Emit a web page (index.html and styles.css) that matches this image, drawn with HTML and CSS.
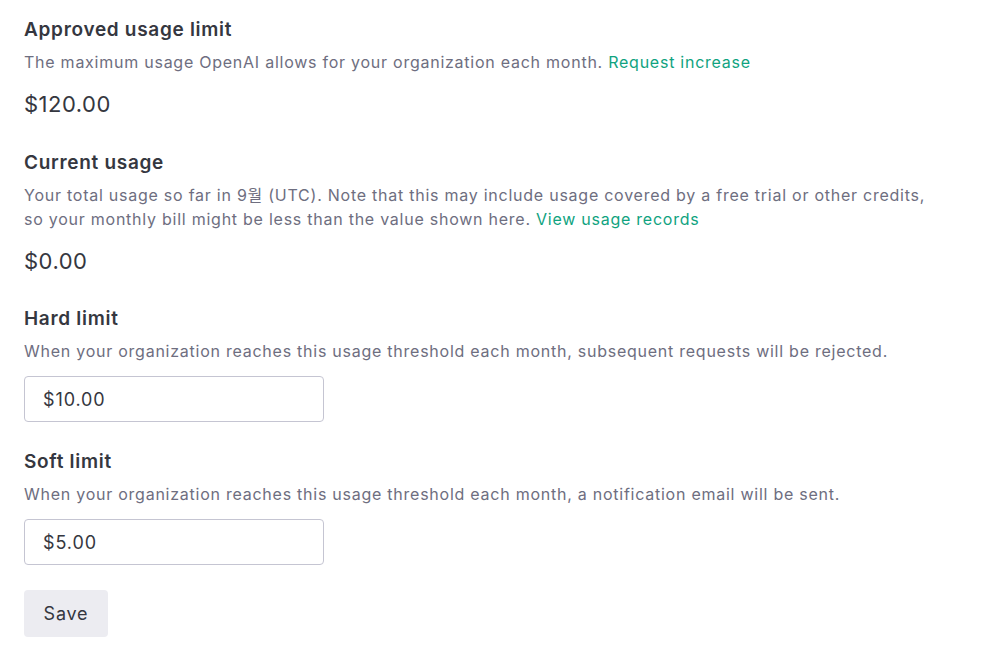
FILE: index.html
```html
<!DOCTYPE html>
<html>
<head>
<meta charset="utf-8">
<link rel="stylesheet" href="styles.css">
</head>
<body>
<main class="page">
  <section class="block first">
    <h2 class="title">Approved usage limit</h2>
    <p class="desc">The maximum usage OpenAI allows for your organization each month. <a class="link" href="#">Request increase</a></p>
    <div class="amount">$120.00</div>
  </section>
  <section class="block">
    <h2 class="title">Current usage</h2>
    <p class="desc wrap">Your total usage so far in 9월 (UTC). Note that this may include usage covered by a free trial or other credits, so your monthly bill might be less than the value shown here. <a class="link" href="#">View usage records</a></p>
    <div class="amount">$0.00</div>
  </section>
  <section class="block hard">
    <h2 class="title">Hard limit</h2>
    <p class="desc">When your organization reaches this usage threshold each month, subsequent requests will be rejected.</p>
    <input class="field" type="text" value="$10.00">
  </section>
  <section class="block soft">
    <h2 class="title">Soft limit</h2>
    <p class="desc">When your organization reaches this usage threshold each month, a notification email will be sent.</p>
    <input class="field" type="text" value="$5.00">
  </section>
  <button class="save" type="button">Save</button>
</main>
</body>
</html>
```
FILE: styles.css
```css
html, body {
  margin: 0;
  padding: 0;
  background: #ffffff;
}
body {
  font-family: Inter, "Noto Sans", "Noto Sans CJK KR", sans-serif;
  color: #353740;
}
.page {
  padding: 18px 24px 0 24px;
  display: flex;
  flex-direction: column;
  align-items: flex-start;
}
.block {
  display: flex;
  flex-direction: column;
  align-items: flex-start;
  margin-bottom: 32px;
}
.block.first {
  margin-bottom: 33px;
}
.block.hard {
  margin-bottom: 28px;
}
.block.soft {
  margin-bottom: 25px;
}
.title {
  margin: 0;
  font-size: 19px;
  line-height: 24px;
  font-weight: 600;
  letter-spacing: 0.7px;
  color: #353740;
}
.desc {
  margin: 8px 0 0 0;
  font-size: 16px;
  line-height: 24px;
  letter-spacing: 0.75px;
  color: #6e6e80;
  max-width: 905px;
}
.link {
  color: #10a37f;
  text-decoration: none;
}
.amount {
  margin-top: 16px;
  font-size: 22px;
  line-height: 28px;
  letter-spacing: 0.5px;
  color: #353740;
}
.field {
  margin-top: 13px;
  box-sizing: border-box;
  width: 300px;
  height: 46px;
  border: 1px solid #c5c5d2;
  border-radius: 4px;
  padding: 0 18px;
  font-family: inherit;
  font-size: 18px;
  letter-spacing: 0.9px;
  color: #353740;
  outline: none;
}
.save {
  box-sizing: border-box;
  width: 84px;
  height: 47px;
  border: none;
  border-radius: 4px;
  background: #ececf1;
  font-family: inherit;
  font-size: 18px;
  letter-spacing: 0.8px;
  color: #353740;
  padding: 0;
}
```
